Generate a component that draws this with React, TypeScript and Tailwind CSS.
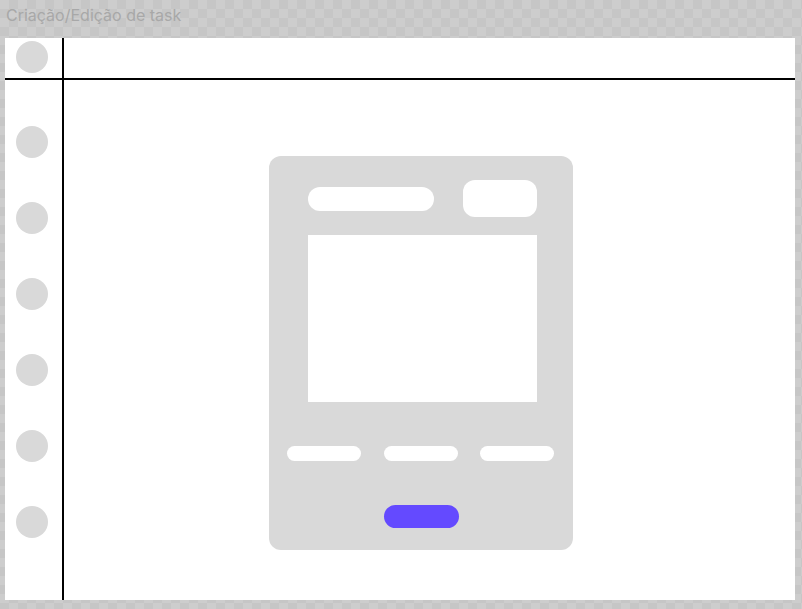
export default function App() {
  const sideCircles = [0, 1, 2, 3, 4, 5]

  return (
    <div className="w-[802px] h-[609px] flex flex-col bg-[repeating-conic-gradient(#c6c6c6_0%_25%,#cdcdcd_0%_50%)] bg-[length:18px_18px] font-['Inter',sans-serif]">
      {/* Frame label */}
      <div className="h-[38px] pl-[6px] pt-[5px] text-[16px] leading-[20px] text-[#a8a8a8]">
        Criação/Edição de task
      </div>

      {/* Frame */}
      <div className="ml-[5px] mr-[7px] mb-[9px] flex-1 bg-white flex flex-col">
        {/* Header row */}
        <div className="h-[42px] flex border-b-2 border-black">
          <div className="w-[59px] border-r-2 border-black pl-[11px] pt-[3px]">
            <div className="w-8 h-8 rounded-full bg-[#d9d9d9]" />
          </div>
          <div className="flex-1" />
        </div>

        {/* Body */}
        <div className="flex-1 flex">
          <div className="w-[59px] border-r-2 border-black pl-[11px] pt-[46px] flex flex-col gap-[44px]">
            {sideCircles.map((i) => (
              <div key={i} className="w-8 h-8 rounded-full bg-[#d9d9d9]" />
            ))}
          </div>

          <div className="flex-1 pl-[205px] pt-[76px]">
            {/* Task card */}
            <div className="w-[304px] h-[394px] rounded-xl bg-[#d9d9d9] flex flex-col pt-[24px]">
              <div className="flex items-center justify-between pl-[39px] pr-[36px]">
                <div className="w-[126px] h-6 rounded-full bg-white" />
                <div className="w-[74px] h-[37px] rounded-xl bg-white" />
              </div>

              <div className="ml-[39px] mt-[18px] w-[229px] h-[167px] bg-white" />

              <div className="mt-[44px] pl-[18px] pr-[19px] flex justify-between">
                <div className="w-[74px] h-[15px] rounded-full bg-white" />
                <div className="w-[74px] h-[15px] rounded-full bg-white" />
                <div className="w-[74px] h-[15px] rounded-full bg-white" />
              </div>

              <div className="mt-[44px] flex justify-center">
                <div className="w-[75px] h-[23px] rounded-full bg-[#644aff]" />
              </div>
            </div>
          </div>
        </div>
      </div>
    </div>
  )
}
